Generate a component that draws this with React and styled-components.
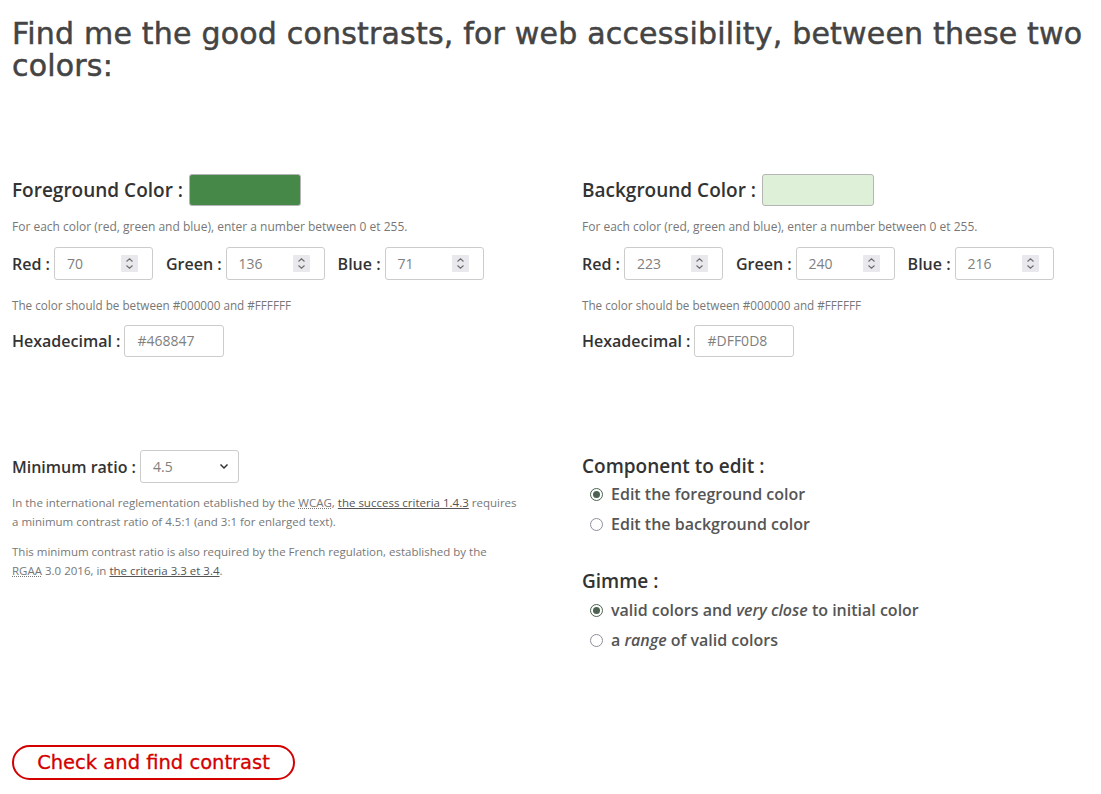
import React from 'react';
import styled, { createGlobalStyle } from 'styled-components';

const Global = createGlobalStyle`
  html, body {
    margin: 0;
    padding: 0;
    background: #fff;
  }
  body {
    font-family: "Open Sans", "Liberation Sans", sans-serif;
    color: #333;
  }
`;

const Page = styled.div`
  padding: 0 12px;
`;

const Title = styled.h1`
  margin: 18px 0 0;
  font-family: "DejaVu Sans", "Liberation Sans", sans-serif;
  font-weight: normal;
  font-size: 30px;
  line-height: 32px;
  letter-spacing: 0.2px;
  color: #444;
  -webkit-text-stroke: 0.5px #444;
`;

const Columns = styled.div`
  display: grid;
  grid-template-columns: 570px 1fr;
  margin-top: ${p => p.$top}px;
`;

const Block = styled.section`
  display: flex;
  flex-direction: column;
  align-items: flex-start;
`;

const HeaderRow = styled.div`
  display: flex;
  align-items: center;
  gap: 6px;
  height: 32px;
`;

const Heading = styled.h2`
  margin: ${p => p.$top || 0}px 0 0;
  font-size: 19px;
  font-weight: 600;
  line-height: 24px;
  color: #333;
`;

const Swatch = styled.div`
  width: 110px;
  height: 30px;
  border: 1px solid #b5b5b5;
  border-radius: 3px;
  background: ${p => p.$color};
`;

const Help = styled.p`
  margin: ${p => p.$top}px 0 0;
  font-size: ${p => p.$size || 12}px;
  line-height: 16px;
  color: #777;
`;

const FieldRow = styled.div`
  display: flex;
  align-items: center;
  height: 33px;
  margin-top: ${p => p.$top}px;
`;

const Label = styled.label`
  font-size: 16px;
  font-weight: 600;
  color: #333;
  margin-left: ${p => p.$gap || 0}px;
  margin-right: 4px;
`;

const Box = styled.div`
  box-sizing: border-box;
  display: flex;
  align-items: center;
  width: ${p => p.$w || 99}px;
  height: ${p => p.$h || 33}px;
  padding: 0 ${p => p.$pr || 15}px 0 12px;
  border: 1px solid #ccc;
  border-radius: 3px;
  background: #fff;
`;

const Value = styled.span`
  flex: 1;
  font-size: 14px;
  color: #808080;
`;

const Spin = styled.span`
  display: flex;
  align-items: center;
  justify-content: center;
  width: 17px;
  height: 17px;
  background: #e9e9ed;
  border-radius: 1px;
`;

const Para = styled.p`
  margin: ${p => p.$top}px 0 0;
  max-width: 505px;
  font-size: 11.5px;
  line-height: 19px;
  color: #777;
`;

const Link = styled.a`
  color: #555;
  text-decoration: underline;
`;

const Abbr = styled.abbr`
  color: #777;
  text-decoration: underline dotted;
`;

const RadioList = styled.div`
  display: flex;
  flex-direction: column;
  padding-left: 8px;
  margin-top: ${p => p.$top || 0}px;
`;

const RadioRow = styled.label`
  display: flex;
  align-items: center;
  height: 30px;
  gap: 8px;
  font-size: 16px;
  font-weight: 600;
  color: #555;
  em { font-style: italic; }
`;

const Dot = styled.span`
  box-sizing: border-box;
  width: 13px;
  height: 13px;
  border-radius: 50%;
  border: 1px solid ${p => (p.$on ? '#4b6350' : '#8f8f9d')};
  display: flex;
  align-items: center;
  justify-content: center;
  &::after {
    content: '';
    display: ${p => (p.$on ? 'block' : 'none')};
    width: 7px;
    height: 7px;
    border-radius: 50%;
    background: #4b6350;
  }
`;

const Button = styled.button`
  margin-top: ${p => p.$top}px;
  box-sizing: border-box;
  width: 283px;
  height: 35px;
  border: 2px solid #d40000;
  border-radius: 18px;
  background: #fff;
  color: #d40000;
  font-family: "DejaVu Sans", "Liberation Sans", sans-serif;
  font-size: 19.5px;
  -webkit-text-stroke: 0.3px #d40000;
  line-height: 1;
  padding: 0;
  cursor: pointer;
`;

const Spinner = () => (
  <Spin>
    <svg width="9" height="13" viewBox="0 0 9 13" fill="none" stroke="#6b6b6b" strokeWidth="1.1">
      <path d="M1.5 4.5 L4.5 1.8 L7.5 4.5" />
      <path d="M1.5 8.5 L4.5 11.2 L7.5 8.5" />
    </svg>
  </Spin>
);

const NumberField = ({ value }) => (
  <Box $pr={14}>
    <Value>{value}</Value>
    <Spinner />
  </Box>
);

const Chevron = () => (
  <svg width="10" height="7" viewBox="0 0 10 7" fill="none" stroke="#333" strokeWidth="1.5">
    <path d="M1.5 1.5 L5 5 L8.5 1.5" />
  </svg>
);

const ColorBlock = ({ title, color, rgb, hex }) => (
  <Block>
    <HeaderRow>
      <Heading>{title}</Heading>
      <Swatch $color={color} />
    </HeaderRow>
    <Help $top={13}>For each color (red, green and blue), enter a number between 0 et 255.</Help>
    <FieldRow $top={12}>
      <Label>Red :</Label>
      <NumberField value={rgb[0]} />
      <Label $gap={13}>Green :</Label>
      <NumberField value={rgb[1]} />
      <Label $gap={13}>Blue :</Label>
      <NumberField value={rgb[2]} />
    </FieldRow>
    <Help $top={17} $size={11.7}>The color should be between #000000 and #FFFFFF</Help>
    <FieldRow $top={11}>
      <Label>Hexadecimal :</Label>
      <Box $w={100} $h={32}>
        <Value>{hex}</Value>
      </Box>
    </FieldRow>
  </Block>
);

const Radio = ({ on, children }) => (
  <RadioRow>
    <Dot $on={on} />
    <span>{children}</span>
  </RadioRow>
);

export default function App() {
  return (
    <Page>
      <Global />
      <Title>Find me the good constrasts, for web accessibility, between these two colors:</Title>

      <Columns $top={92}>
        <ColorBlock title="Foreground Color :" color="#468847" rgb={[70, 136, 71]} hex="#468847" />
        <ColorBlock title="Background Color :" color="#DFF0D8" rgb={[223, 240, 216]} hex="#DFF0D8" />
      </Columns>

      <Columns $top={93}>
        <Block>
          <FieldRow $top={0}>
            <Label>Minimum ratio :</Label>
            <Box $w={99} $pr={9}>
              <Value>4.5</Value>
              <Chevron />
            </Box>
          </FieldRow>
          <Para $top={10}>
            In the international reglementation etablished by the <Abbr title="Web Content Accessibility Guidelines">WCAG</Abbr>,{' '}
            <Link href="#">the success criteria 1.4.3</Link> requires a minimum contrast ratio of 4.5:1 (and 3:1 for enlarged text).
          </Para>
          <Para $top={11}>
            This minimum contrast ratio is also required by the French regulation, established by the{' '}
            <Abbr title="Référentiel Général d'Accessibilité pour les Administrations">RGAA</Abbr> 3.0 2016, in{' '}
            <Link href="#">the criteria 3.3 et 3.4</Link>.
          </Para>
        </Block>
        <Block>
          <Heading $top={4}>Component to edit :</Heading>
          <RadioList $top={1}>
            <Radio on>Edit the foreground color</Radio>
            <Radio>Edit the background color</Radio>
          </RadioList>
          <Heading $top={30}>Gimme :</Heading>
          <RadioList $top={2}>
            <Radio on>valid colors and <em>very close</em> to initial color</Radio>
            <Radio>a <em>range</em> of valid colors</Radio>
          </RadioList>
        </Block>
      </Columns>

      <Button $top={90}>Check and find contrast</Button>
    </Page>
  );
}
